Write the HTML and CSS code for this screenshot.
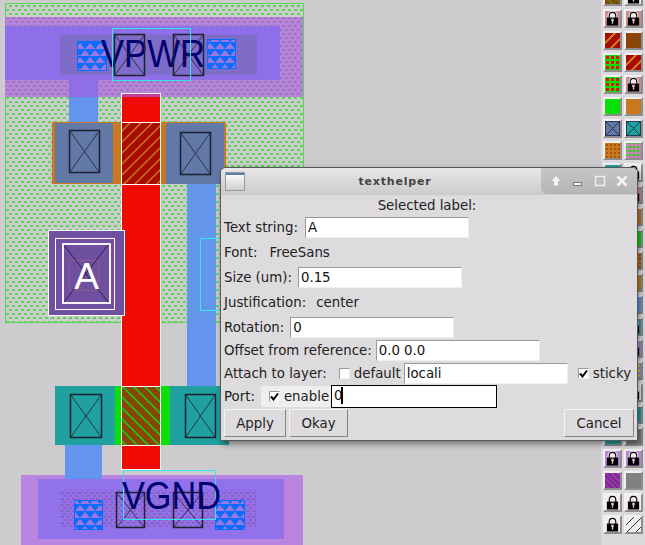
FILE: index.html
```html
<!DOCTYPE html>
<html lang="en">
<head>
<meta charset="utf-8">
<title>texthelper</title>
<link rel="stylesheet" href="styles.css">
</head>
<body>
<svg class="defs" width="0" height="0" aria-hidden="true">
  <defs>
    <pattern id="p-green" width="6" height="8" patternUnits="userSpaceOnUse">
      <rect class="f-green-dot" x="0" y="1" width="3" height="2"/>
      <rect class="f-green-dot" x="3" y="5" width="3" height="2"/>
    </pattern>
    <pattern id="p-band" width="6" height="8" patternUnits="userSpaceOnUse">
      <rect class="f-band-dot" x="0" y="1" width="3" height="2"/>
      <rect class="f-band-dot" x="3" y="5" width="3" height="2"/>
    </pattern>
    <pattern id="p-inner" width="6" height="6" patternUnits="userSpaceOnUse">
      <rect class="f-inner-dot" x="0" y="0" width="4" height="2"/>
      <rect class="f-inner-dot" x="3" y="3" width="4" height="2"/>
    </pattern>
    <pattern id="p-scale" width="10" height="14" patternUnits="userSpaceOnUse">
      <polygon class="f-blue" points="0,0 10,0 10,1 5,7 0,1"/>
      <polygon class="f-blue" points="-5,7 5,7 5,8 0,14 -5,8"/>
      <polygon class="f-blue" points="5,7 15,7 15,8 10,14 5,8"/>
    </pattern>
    <pattern id="p-redhatch" width="11" height="11" patternUnits="userSpaceOnUse">
      <rect class="f-darkred" width="11" height="11"/>
      <path class="s-orange" d="M-2 13L13 -2M-2 2L2 -2M9 13L13 9"/>
    </pattern>
    <pattern id="p-greenhatch" width="11" height="11" patternUnits="userSpaceOnUse">
      <rect class="f-brown" width="11" height="11"/>
      <path class="s-greenline" d="M-2 -2L13 13M-2 9L2 13M9 -2L13 2"/>
    </pattern>
    <symbol id="lock" viewBox="0 0 16 16">
      <path class="lock-halo" d="M4.500 8V5a3.500 3.500 0 0 1 7 0V8"/>
      <rect class="lock-body" x="2" y="7" width="12" height="8.500"/>
      <path class="lock-shackle" d="M4.500 8V5a3.500 3.500 0 0 1 7 0V8"/>
      <path class="lock-key" d="M8 9.500v4"/>
      <circle class="lock-keyhead" cx="8" cy="9.500" r="1.500"/>
    </symbol>
    <symbol id="cross" class="cross-sym" viewBox="0 0 14 14" preserveAspectRatio="none">
      <rect class="cross-box" x="0" y="0" width="14" height="14"/>
      <path class="cross-line" d="M0 0L14 14M14 0L0 14"/>
    </symbol>
  </defs>
</svg>

<svg class="canvas" width="601" height="545" viewBox="0 0 601 545">
  <rect class="well" x="5.500" y="3.500" width="298" height="319"/>

  <rect class="f-blue-strap" x="187" y="184" width="29" height="202"/>
  <rect class="dots-over" x="187" y="184" width="29" height="138"/>
  <rect class="cyan" x="200.500" y="238.500" width="60" height="72"/>

  <rect class="band" x="5" y="17" width="298" height="80"/>
  <rect class="band-dots" x="5" y="17" width="298" height="80"/>
  <rect class="f-blue-strap" x="69" y="97" width="29" height="26"/>
  <rect class="met" x="5" y="26" width="275" height="54"/>
  <rect class="met" x="69" y="80" width="29" height="17"/>
  <rect class="f-inner" x="60" y="35" width="197" height="40"/>
  <rect class="scale-bg" x="77.500" y="41.500" width="29" height="29"/>
  <rect class="scale" x="77.500" y="41.500" width="29" height="29"/>
  <rect class="scale-bg" x="207.500" y="39.500" width="28" height="29"/>
  <rect class="scale" x="207.500" y="39.500" width="28" height="29"/>
  <text class="net" x="101" y="67" textLength="104" lengthAdjust="spacingAndGlyphs">VPWR</text>
  <use href="#cross" x="114.500" y="34.500" width="30" height="41"/>
  <use href="#cross" x="173.500" y="34.500" width="30" height="41"/>
  <rect class="cyan" x="112.500" y="28.500" width="78" height="52"/>

  <rect class="f-orange" x="52" y="122" width="174" height="62"/>
  <rect class="f-steel" x="55" y="123" width="58" height="60"/>
  <rect class="f-steel" x="166" y="123" width="58" height="61"/>
  <use href="#cross" x="69.500" y="130.500" width="30" height="42"/>
  <use href="#cross" x="180.500" y="132.500" width="30" height="42"/>

  <rect class="f-teal" x="55" y="386" width="174" height="59"/>
  <rect class="f-lime" x="115" y="386" width="55" height="59"/>
  <use href="#cross" x="70.500" y="394.500" width="31" height="43"/>
  <use href="#cross" x="185.500" y="394.500" width="30" height="43"/>
  <rect class="f-blue-strap" x="65" y="445" width="37" height="34"/>

  <rect class="f-band2" x="21" y="475" width="282" height="70"/>
  <rect class="f-blue-strap" x="65" y="470" width="37" height="9"/>
  <rect class="met2" x="38" y="479" width="246" height="60"/>
  <rect class="inner-dots" x="60" y="490" width="196" height="37"/>
  <rect class="scale-bg" x="74.500" y="500.500" width="28" height="29"/>
  <rect class="scale" x="74.500" y="500.500" width="28" height="29"/>
  <rect class="scale-bg" x="215.500" y="500.500" width="29" height="29"/>
  <rect class="scale" x="215.500" y="500.500" width="29" height="29"/>
  <use href="#cross" x="116.500" y="492.500" width="28" height="35"/>
  <use href="#cross" x="173.500" y="492.500" width="29" height="35"/>
  <rect class="cyan" x="123.500" y="470.500" width="92" height="49"/>
  <text class="net" x="122" y="509" textLength="99" lengthAdjust="spacingAndGlyphs">VGND</text>

  <rect class="gate" x="121.500" y="93.500" width="39" height="376"/>
  <rect class="f-magenta" x="122" y="94" width="38" height="3"/>
  <rect class="hatch-red" x="121.500" y="122.500" width="39" height="62"/>
  <rect class="hatch-green" x="121.500" y="386.500" width="39" height="59"/>

  <rect class="lab-outer" x="48.500" y="230.500" width="76" height="85"/>
  <rect class="lab-mid" x="55.500" y="238.500" width="59" height="71"/>
  <rect class="lab-faint" x="69.500" y="260.500" width="29" height="30"/>
  <path class="lab-x" d="M64 245L108 302M108 245L64 302"/>
  <rect class="lab-inner" x="63" y="244" width="47" height="59"/>
  <text class="lab-a" x="86.500" y="289" text-anchor="middle">A</text>
</svg>

<div class="palette">
  <div class="sw c-brown-g"></div><div class="sw c-white"><svg class="lk"><use href="#lock"/></svg></div>
  <div class="sw c-pink"><svg class="lk"><use href="#lock"/></svg></div><div class="sw c-pink"><svg class="lk"><use href="#lock"/></svg></div>
  <div class="sw c-red-o"></div><div class="sw c-brown"></div>
  <div class="sw c-green-r"></div><div class="sw c-red-o"></div>
  <div class="sw c-green-r"></div><div class="sw c-pink"><svg class="lk"><use href="#lock"/></svg></div>
  <div class="sw c-green"></div><div class="sw c-orange"></div>
  <div class="sw c-steel"><svg class="lk"><use href="#cross"/></svg></div><div class="sw c-teal"><svg class="lk"><use href="#cross"/></svg></div>
  <div class="sw c-orange-d"></div><div class="sw c-green-p"></div>
  <div class="sw c-teal"></div><div class="sw c-white"><svg class="lk"><use href="#lock"/></svg></div>
  <div class="sw c-pink"></div><div class="sw c-pink"><svg class="lk"><use href="#lock"/></svg></div>
  <div class="sw c-orange"></div><div class="sw c-orange"></div>
  <div class="sw c-green"></div><div class="sw c-green"></div>
  <div class="sw c-orange"></div><div class="sw c-orange-d"></div>
  <div class="sw c-gold"></div><div class="sw c-gold"></div>
  <div class="sw c-blue"></div><div class="sw c-blue"></div>
  <div class="sw c-teal"></div><div class="sw c-tealblue"><svg class="lk"><use href="#lock"/></svg></div>
  <div class="sw c-lilac"></div><div class="sw c-lilac"><svg class="lk"><use href="#lock"/></svg></div>
  <div class="sw c-violet"></div><div class="sw c-violet-y"></div>
  <div class="sw c-grey"></div><div class="sw c-white"><svg class="lk"><use href="#lock"/></svg></div>
  <div class="sw c-teal"></div><div class="sw c-teal"></div>
  <div class="sw c-teal"></div><div class="sw c-grey"></div>
  <div class="sw c-lilac"><svg class="lk"><use href="#lock"/></svg></div><div class="sw c-lilac"><svg class="lk"><use href="#lock"/></svg></div>
  <div class="sw c-purple"></div><div class="sw c-grey"></div>
  <div class="sw c-white"><svg class="lk"><use href="#lock"/></svg></div><div class="sw c-white"><svg class="lk"><use href="#lock"/></svg></div>
  <div class="sw c-white"><svg class="lk"><use href="#lock"/></svg></div><div class="sw c-diag"></div>
</div>

<div class="dialog">
  <div class="titlebar">
    <div class="winicon"><div class="winicon-top"></div></div>
    <div class="title">texthelper</div>
    <div class="winbtns">
      <svg class="wb" viewBox="0 0 14 14"><path class="wb-fill" d="M7 2L11.500 7H9V11.500H5V7H2.500Z"/></svg>
      <svg class="wb" viewBox="0 0 14 14"><rect class="wb-min" x="2.500" y="8.500" width="8" height="3"/></svg>
      <svg class="wb" viewBox="0 0 14 14"><rect class="wb-line" x="2.500" y="2.500" width="9" height="9"/></svg>
      <svg class="wb" viewBox="0 0 14 14"><path class="wb-x" d="M2.500 2.500L11.500 11.500M11.500 2.500L2.500 11.500"/></svg>
    </div>
  </div>
  <div class="body">
    <div class="heading">Selected label:</div>
    <div class="group-wide">
      <div class="row"><span class="gap7">Text string:</span><span class="entry">A</span></div>
      <div class="row"><span class="gap-font">Font:</span><span>FreeSans</span></div>
      <div class="row"><span class="gap6">Size (um):</span><span class="entry">0.15</span></div>
      <div class="row"><span class="gap-just">Justification:</span><span>center</span></div>
      <div class="row"><span class="gap6">Rotation:</span><span class="entry">0</span></div>
    </div>
    <div class="group-tight">
      <div class="row"><span class="gap-offset">Offset from reference:</span><span class="entry">0.0 0.0</span></div>
      <div class="row">
        <span class="gap-attach">Attach to layer:</span>
        <span class="check"></span><span class="gap-default">default</span>
        <span class="entry">locali</span>
        <span class="check check-sticky"><svg class="tick" viewBox="0 0 9 9"><path d="M1 4.500L3.500 7.500L8 1.500"/></svg></span><span>sticky</span>
      </div>
      <div class="row">
        <span class="gap-port">Port:</span>
        <span class="portframe"><span class="check"><svg class="tick" viewBox="0 0 9 9"><path d="M1 4.500L3.500 7.500L8 1.500"/></svg></span><span>enable</span></span>
        <span class="entry entry-focus">0<span class="caret"></span></span>
      </div>
      <div class="btnrow">
        <button class="btn btn-apply">Apply</button>
        <button class="btn btn-okay">Okay</button>
        <button class="btn btn-cancel">Cancel</button>
      </div>
    </div>
  </div>
</div>
</body>
</html>
```

FILE: styles.css
```css
* { box-sizing: border-box; }
html, body { margin: 0; padding: 0; }
body {
  width: 645px;
  height: 545px;
  overflow: hidden;
  position: relative;
  background: #dbd9db;
  font-family: "DejaVu Sans", sans-serif;
}
.defs { position: absolute; }
.canvas {
  position: absolute;
  left: 0;
  top: 0;
  background: #cdcbcd;
}

/* pattern fills */
.f-green-dot { fill: #55d855; }
.f-band-dot { fill: #9a78c4; }
.f-inner-dot { fill: #8a62c8; }
.f-blue { fill: #0a6cff; }
.f-darkred { fill: #a80c00; }
.f-brown { fill: #8a4408; }
.s-orange { stroke: #c8781e; stroke-width: 1.5; fill: none; }
.s-greenline { stroke: #10d810; stroke-width: 1.5; fill: none; }

/* layout layers */
.well { fill: url(#p-green); stroke: #55d855; stroke-width: 1; }
.dots-over { fill: url(#p-green); opacity: .12; }
.band { fill: #b884d8; }
.band-dots { fill: url(#p-band); }
.met { fill: #8f6fe8; }
.met2 { fill: #9272ea; }
.f-inner { fill: #7f6bc8; }
.inner-dots { fill: url(#p-inner); }
.f-band2 { fill: #b985e0; }
.f-blue-strap { fill: #6395ee; }
.f-orange { fill: #c8781e; }
.f-steel { fill: #6279a8; }
.f-teal { fill: #20a0a0; }
.f-lime { fill: #08e008; }
.f-magenta { fill: #c0409a; }
.scale-bg { fill: #9a78e0; stroke: #0a6cff; stroke-width: 1; }
.scale { fill: url(#p-scale); }
.cyan { fill: none; stroke: #30e8e8; stroke-width: 1; }
.net {
  font-family: "Liberation Sans", sans-serif;
  font-size: 38px;
  fill: #00006e;
}
.gate { fill: #f00a04; stroke: #ffffff; stroke-width: 1; }
.hatch-red { fill: url(#p-redhatch); stroke: #fff; stroke-width: 1; }
.hatch-green { fill: url(#p-greenhatch); stroke: #fff; stroke-width: 1; }
.lab-outer { fill: #6f4fa0; stroke: #fff; stroke-width: 1; }
.lab-mid { fill: none; stroke: #fff; stroke-width: 1; }
.lab-inner { fill: none; stroke: #f4f0fa; stroke-width: 2; }
.lab-x { fill: none; stroke: #2c2050; stroke-width: 1; }
.lab-faint { fill: none; stroke: #8c5c88; stroke-width: 1; }
.lab-a {
  font-family: "Liberation Sans", sans-serif;
  font-size: 37px;
  fill: #fff;
}
.cross-sym { overflow: visible; }
.cross-box { fill: none; stroke: #1d2230; stroke-width: 1.5; vector-effect: non-scaling-stroke; }
.cross-line { fill: none; stroke: #1d2230; stroke-width: 1; opacity: .8; vector-effect: non-scaling-stroke; }

/* layer palette */
.palette {
  position: absolute;
  left: 603px;
  top: -13px;
  display: grid;
  grid-template-columns: 19px 19px;
  grid-auto-rows: 19px;
  column-gap: 2px;
  row-gap: 3px;
}
.sw {
  width: 19px;
  height: 19px;
  border: 2px solid;
  border-color: #f2f0f2 #8e8c8e #8e8c8e #f2f0f2;
  overflow: hidden;
}
.lk { display: block; width: 15px; height: 15px; }
.lock-body { fill: #000; }
.lock-halo { fill: #f0e6ee; stroke: #f4f0f4; stroke-width: 3.500; }
.lock-shackle { fill: none; stroke: #000; stroke-width: 1.200; }
.lock-key { stroke: #e8b8d0; stroke-width: 1.500; }
.lock-keyhead { fill: #e8b8d0; }
.c-white { background: #efedef; }
.c-pink { background: #cf8a8a; }
.c-lilac { background: #b884d8; }
.c-tealblue { background: #4aa0b0; }
.c-brown { background: #8a4408; }
.c-brown-g { background: repeating-linear-gradient(45deg, #8a4408 0 5px, #10d810 5px 6px); }
.c-red-o { background: repeating-linear-gradient(135deg, #a80c00 0 6px, #c8781e 6px 8px); }
.c-green { background: #08e008; }
.c-green-r { background: #08e008 radial-gradient(circle, #f00a04 0 2px, transparent 2px) 0 0 / 5px 5px; }
.c-green-p { background: #08e008 radial-gradient(circle, #d87cc0 0 1.500px, transparent 2px) 0 0 / 4px 4px; }
.c-orange { background: #c8781e; }
.c-orange-d { background: #c8781e radial-gradient(circle, #a8520a 0 1px, transparent 1.500px) 0 0 / 4px 4px; }
.c-gold { background: #c8841a; }
.c-blue { background: #6395ee; }
.c-steel { background: #6279a8; }
.c-teal { background: #20a0a0; }
.c-violet { background: #a48cc8; }
.c-violet-y { background: #a48cc8 radial-gradient(circle, #e8d820 0 1px, transparent 1.500px) 0 0 / 5px 5px; }
.c-purple { background: repeating-linear-gradient(45deg, #7a2a90 0 2px, #9a3aa8 2px 4px); }
.c-grey { background: #828082; }
.c-diag { background: repeating-linear-gradient(135deg, #efedef 0 5px, #333 5px 6px); }

/* dialog window */
.dialog {
  position: absolute;
  left: 220px;
  top: 167px;
  width: 418px;
  height: 274px;
  border: 1px solid #55575a;
  border-radius: 6px 6px 0 0;
  background: #dddbdd;
  box-shadow: 2px 3px 6px rgba(0, 0, 0, .45);
  color: #222;
  font-size: 13.33px;
}
.titlebar {
  position: relative;
  display: flex;
  align-items: center;
  height: 27px;
  border-radius: 5px 5px 0 0;
  background: linear-gradient(#e8e6e8, #cbcbcb);
}
.winicon {
  position: absolute;
  left: 4px;
  top: 4px;
  width: 20px;
  height: 19px;
  border: 1px solid #999;
  background: linear-gradient(#fff, #cfcfcf);
}
.winicon-top { height: 2px; background: #5a7fae; }
.title {
  width: 100%;
  padding-right: 68px;
  text-align: center;
  font-size: 11px;
  font-weight: bold;
  letter-spacing: .8px;
  color: #444;
}
.winbtns {
  position: absolute;
  right: 0;
  top: 0;
  width: 96px;
  height: 26px;
  display: flex;
  align-items: center;
  gap: 8px;
  padding-left: 8px;
  background: linear-gradient(#c6c6c6, #b4b4b4);
  border-radius: 0 5px 0 6px;
}
.wb { width: 14px; height: 14px; display: block; }
.wb-fill { fill: #f4f4f4; }
.wb-min { fill: #f4f4f4; stroke: #777; stroke-width: 1; }
.wb-line { fill: none; stroke: #f0f0f0; stroke-width: 1.500; }
.wb-x { fill: none; stroke: #f4f4f4; stroke-width: 2.500; }
.body { padding: 2px 3px 0 3px; }
.heading { height: 20px; line-height: 18px; text-align: center; padding-right: 4px; }
.group-wide { display: flex; flex-direction: column; gap: 4px; }
.group-tight { display: flex; flex-direction: column; gap: 2px; margin-top: 2px; }
.row { display: flex; align-items: center; height: 21px; white-space: nowrap; }
.entry {
  display: block;
  position: relative;
  width: 164px;
  height: 21px;
  line-height: 19px;
  padding: 0 2px;
  background: #fff;
  color: #111;
  border: 1px solid;
  border-color: #9a989a #f0eef0 #f0eef0 #9a989a;
}
.entry-focus {
  width: 166px;
  height: 23px;
  line-height: 20px;
  border: 1.500px solid #000;
}
.caret {
  display: inline-block;
  width: 2px;
  height: 17px;
  background: #000;
  vertical-align: -4px;
  margin-left: -1px;
}
.gap6 { margin-right: 6px; }
.gap7 { margin-right: 7px; }
.gap-offset { margin-right: 4px; }
.gap-font { margin-right: 12px; }
.gap-just { margin-right: 10px; }
.gap-attach { margin-right: 12px; }
.gap-default { margin: 0 3px 0 4px; }
.gap-port { margin-right: 6px; }
.check {
  display: block;
  width: 11px;
  height: 11px;
  border: 1px solid;
  border-color: #9a989a #f0eef0 #f0eef0 #9a989a;
  background: #fff;
}
.check-sticky { margin: 0 4px 0 10px; }
.tick { display: block; width: 9px; height: 9px; fill: none; stroke: #000; stroke-width: 2; }
.portframe {
  display: flex;
  align-items: center;
  gap: 4px;
  width: 70px;
  height: 21px;
  padding-left: 8px;
  background: #efeeef;
}
.btnrow { display: flex; gap: 3px; height: 28px; }
.btn {
  font: inherit;
  color: #222;
  padding: 0;
  height: 28px;
  background: #dddbdd;
  border: 1px solid;
  border-color: #f4f2f4 #858385 #858385 #f4f2f4;
}
.btn-apply { width: 62px; }
.btn-okay { width: 59px; }
.btn-cancel { width: 70px; margin-left: auto; }
```
